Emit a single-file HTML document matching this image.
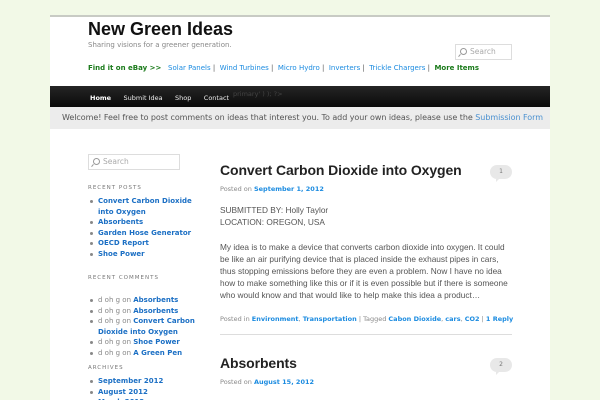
<!DOCTYPE html>
<html><head><meta charset="utf-8"><style>
*{margin:0;padding:0;box-sizing:border-box}
html,body{width:600px;height:400px;overflow:hidden}
body{background:#f2f9e7;font-family:"DejaVu Sans","Liberation Sans",sans-serif;color:#373737;position:relative}
#page{position:absolute;left:50px;top:15px;width:500px;height:385px;background:#fff;border-top:2px solid #c8cbc4;overflow:hidden}
.a{position:absolute;white-space:nowrap}
a{color:#1b8be0;text-decoration:none}
.b{font-weight:bold}
ul{list-style:none}
li{position:relative;padding-left:10px;font-size:7px;line-height:10.5px}
li:before{content:"";position:absolute;left:2px;top:4px;width:3px;height:3px;background:#888;border-radius:50%}
li a{font-weight:bold;color:#1b6fc4}
.wt{font-size:5.5px;letter-spacing:1px;color:#777;text-transform:uppercase}
.bub{position:absolute;width:22px;height:14px;border-radius:7px;background:#e8e8e8;color:#777;font-size:6px;text-align:center;line-height:14px}
.bub:after{content:"";position:absolute;left:6px;bottom:-3px;border-left:3px solid #e8e8e8;border-bottom:3px solid transparent}
.srch{position:absolute;border:1px solid #ddd;background:#fff;font-size:7.5px;color:#aaa;padding-left:14px;line-height:14px}
.srch:before{content:"";position:absolute;left:4px;top:3px;width:5px;height:5px;border:1px solid #999;border-radius:50%}
.srch:after{content:"";position:absolute;left:3px;top:9px;width:1px;height:3px;background:#999;transform:rotate(40deg)}
.t{font-family:"Liberation Sans",sans-serif;font-weight:bold;font-size:14px;color:#222;letter-spacing:-0.1px}
.p{font-family:"Liberation Sans",sans-serif;font-size:8.3px;line-height:12px;color:#555}
</style></head><body>
<div id="page">
<div class="a b" style="left:38px;top:2px;font-size:18px;color:#111;font-family:'Liberation Sans',sans-serif">New Green Ideas</div>
<div class="a" style="left:38px;top:24px;font-size:7px;color:#888">Sharing visions for a greener generation.</div>
<div class="srch" style="left:405px;top:27px;width:57px;height:16px">Search</div>
<div class="a" style="left:38px;top:47px;font-size:7px;color:#555"><span class="b" style="color:#1a7a1a">Find it on eBay &gt;&gt;</span>&nbsp;&nbsp; <a>Solar Panels</a> |&nbsp; <a>Wind Turbines</a> |&nbsp; <a>Micro Hydro</a> |&nbsp; <a>Inverters</a> |&nbsp; <a>Trickle Chargers</a> |&nbsp; <span class="b" style="color:#1a7a1a">More Items</span></div>
<div class="a" style="left:0;top:69px;width:500px;height:21px;background:linear-gradient(#252525,#0a0a0a)"></div>
<div class="a" style="left:40px;top:77px;font-size:6.5px;color:#eee"><span class="b" style="color:#fff">Home</span>&nbsp;&nbsp;&nbsp;&nbsp;&nbsp;&nbsp;Submit Idea&nbsp;&nbsp;&nbsp;&nbsp;&nbsp;&nbsp;Shop&nbsp;&nbsp;&nbsp;&nbsp;&nbsp;&nbsp;Contact</div>
<div class="a" style="left:183px;top:73px;font-size:6.5px;color:#444">primary' ) ); ?&gt;</div>
<div class="a" style="left:0;top:90px;width:500px;height:22px;background:#ececec"></div>
<div class="a" style="left:12px;top:96px;font-size:8px;letter-spacing:-0.05px;color:#555">Welcome! Feel free to post comments on ideas that interest you. To add your own ideas, please use the <a style="color:#4a90d0">Submission Form</a></div>

<div class="srch" style="left:38px;top:137px;width:92px;height:16px">Search</div>
<div class="a wt" style="left:38px;top:168px">Recent Posts</div>
<ul class="a" style="left:38px;top:179px;width:110px;white-space:normal">
<li><a>Convert Carbon Dioxide into Oxygen</a></li><li><a>Absorbents</a></li><li><a>Garden Hose Generator</a></li><li><a>OECD Report</a></li><li><a>Shoe Power</a></li></ul>
<div class="a wt" style="left:38px;top:258px">Recent Comments</div>
<ul class="a" style="left:38px;top:278px;width:110px;white-space:normal;color:#888">
<li>d oh g on <a>Absorbents</a></li><li>d oh g on <a>Absorbents</a></li><li>d oh g on <a>Convert Carbon Dioxide into Oxygen</a></li><li>d oh g on <a>Shoe Power</a></li><li>d oh g on <a>A Green Pen</a></li></ul>
<div class="a wt" style="left:38px;top:348px">Archives</div>
<ul class="a" style="left:38px;top:359px;width:110px;white-space:normal">
<li><a>September 2012</a></li><li><a>August 2012</a></li><li><a>March 2012</a></li></ul>

<div class="a t" style="left:170px;top:145px">Convert Carbon Dioxide into Oxygen</div>
<div class="bub" style="left:440px;top:148px">1</div>
<div class="a" style="left:170px;top:168px;font-size:6.5px;color:#888">Posted on <a class="b">September 1, 2012</a></div>
<div class="a p" style="left:170px;top:187px">SUBMITTED BY: Holly Taylor<br>LOCATION: OREGON, USA</div>
<div class="a p" style="left:170px;top:224px">My idea is to make a device that converts carbon dioxide into oxygen. It could<br>be like an air purifying device that is placed inside the exhaust pipes in cars,<br>thus stopping emissions before they are even a problem. Now I have no idea<br>how to make something like this or if it is even possible but if there is someone<br>who would know and that would like to help make this idea a product…</div>
<div class="a" style="left:170px;top:298px;font-size:6.5px;color:#888">Posted in <a class="b">Environment</a>, <a class="b">Transportation</a> | Tagged <a class="b">Cabon Dioxide</a>, <a class="b">cars</a>, <a class="b">CO2</a> | <a class="b">1 Reply</a></div>
<div class="a" style="left:170px;top:317px;width:292px;height:1px;background:#ddd"></div>
<div class="a t" style="left:170px;top:338px">Absorbents</div>
<div class="bub" style="left:440px;top:341px">2</div>
<div class="a" style="left:170px;top:361px;font-size:6.5px;color:#888">Posted on <a class="b">August 15, 2012</a></div>
</div>
</body></html>
